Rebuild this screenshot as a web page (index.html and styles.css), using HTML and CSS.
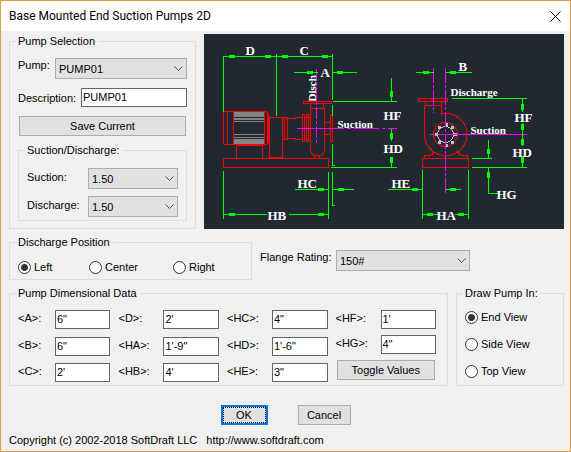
FILE: index.html
```html
<!DOCTYPE html>
<html lang="en">
<head>
<meta charset="utf-8">
<title>Base Mounted End Suction Pumps 2D</title>
<link rel="stylesheet" href="styles.css">
</head>
<body>
<form class="dialog">
  <header class="titlebar">
    <h1>Base Mounted End Suction Pumps 2D</h1>
    <button type="button" class="close" aria-label="Close"><svg width="11" height="11" viewBox="0 0 11 11"><path d="M.5 .5l10 10M10.5 .5l-10 10"/></svg></button>
  </header>
  <main class="content">
    <div class="row row-top">
      <fieldset class="selection">
        <legend>Pump Selection</legend>
        <div class="line line-pump">
          <label for="pump">Pump:</label>
          <span class="select"><select id="pump"><option>PUMP01</option></select><svg width="9" height="6" viewBox="0 0 9 6"><path d="M.5 .5l4 4 4-4"/></svg></span>
        </div>
        <div class="line line-desc">
          <label for="desc">Description:</label>
          <input type="text" id="desc" value="PUMP01">
        </div>
        <button type="button" class="button save">Save Current</button>
        <fieldset class="sizes">
          <legend>Suction/Discharge:</legend>
          <div class="line">
            <label for="suction">Suction:</label>
            <span class="select"><select id="suction"><option>1.50</option></select><svg width="9" height="6" viewBox="0 0 9 6"><path d="M.5 .5l4 4 4-4"/></svg></span>
          </div>
          <div class="line">
            <label for="discharge">Discharge:</label>
            <span class="select"><select id="discharge"><option>1.50</option></select><svg width="9" height="6" viewBox="0 0 9 6"><path d="M.5 .5l4 4 4-4"/></svg></span>
          </div>
        </fieldset>
      </fieldset>
      <svg class="drawing" viewBox="203.5 33.5 360 195" role="img" aria-label="Pump dimension drawing">
        <!-- motor cooling fins -->
        <g class="metal">
          <rect x="233.500" y="111.500" width="30" height="5"/>
          <rect x="233.500" y="117.500" width="30" height="2"/>
          <rect x="233.500" y="120.500" width="30" height="1"/>
          <rect x="233.500" y="133.500" width="30" height="1"/>
          <rect x="233.500" y="136.500" width="30" height="1"/>
          <rect x="233.500" y="138.500" width="30" height="5"/>
        </g>
        <g class="pump">
          <path d="M223 158H328V167H223ZM236 145V158M262 145V158M236 145H262"/>
          <path d="M224 111H266L268 115V142L266 144H224L223 143V112ZM227 111V144M233 111V144M264 111V144M267 113V142"/>
          <path d="M269 117H282V157H269ZM282 117H287V139H282M284 117V139M287 118H295V117H302M287 138H295V139H302"/>
          <path d="M302 114H304V141H302ZM306 114H308V141H306ZM304 117H310M304 139H310"/>
          <path d="M303 101H331V103H303ZM310 103V151L313 155H321L324 151V108M323 103V108M310 108H324M314 155V158M319 155V158"/>
          <path d="M324 122H330M324 134H330M330 115H332V141H330Z"/>
          <path d="M422 158H468V167H422ZM424 158V155H430L435 151M467 158V155H461L456 151"/>
          <path d="M418 98H447V101H418ZM425 101V105M441 101V114M424 105H441M424 105V136"/>
          <path d="M424 134A21 21 0 0 0 445 155A21 21 0 1 0 441 113.500"/>
          <circle cx="445" cy="134" r="12"/>
        </g>
        <g class="bore">
          <circle cx="445" cy="134" r="8"/>
          <path class="bolts" d="M444 124h3M450 127h3M453 134h3M450 142h3M444 145h3M437 142h3M434 134h3M437 127h3"/>
        </g>
        <g class="center">
          <path d="M316 68V144" stroke-dasharray="12 2 3 2"/>
          <path d="M296 128H343M346 128H350M353 128H378M381 128H384M387 128H396"/>
          <path d="M433 67V112M445 67V194" stroke-dasharray="15 2 3 2"/>
          <path d="M429 134H434M437 134H526"/>
        </g>
        <g class="dim">
          <path d="M223 55V111M276 53V115M332 53V99M223 56H332"/>
          <path d="M293 72H317M332 72H356M332 104V115M332 143V165H334"/>
          <path d="M332 101H396M330 167H396M391 77V101M391 128V140M391 156V167"/>
          <path d="M223 170V218M328 171V218M223 214H266M288 214H328M332 171V205H334M294 189H328M332 189H353"/>
          <path d="M415 72H433M445 72H471M451 98H526M522 98V111M522 122V145M522 157V167M471 158H491M471 167H526"/>
          <path d="M488 139V158M488 167V193H497M422 169V218M468 169V218M422 214H437M454 214H468M387 189H422M445 189H460"/>
          <g class="arrows">
            <path d="M226 56l5-1v2zM231 55h3v2h-3zM273 56l-5-1v2zM265 55h3v2h-3zM279 56l5-1v2zM284 55h3v2h-3zM330 56l-5-1v2zM322 55h3v2h-3z"/>
            <path d="M314 72l-4-1v2zM307 71h3v2h-3zM334 72l5-1v2zM339 71h3v2h-3zM226 214l5-1v2zM231 213h3v2h-3zM326 214l-5-1v2zM318 213h3v2h-3z"/>
            <path d="M326 189l-5-1v2zM318 188h3v2h-3zM335 189l5-1v2zM340 188h3v2h-3zM431 72l-5-1v2zM423 71h3v2h-3zM447 72l5-1v2zM452 71h3v2h-3z"/>
            <path d="M420 189l-5-1v2zM412 188h3v2h-3zM447 189l5-1v2zM452 188h3v2h-3zM424 214l5-1v2zM429 213h3v2h-3zM466 214l-5-1v2zM458 213h3v2h-3z"/>
            <path d="M391 99l-1-5h2zM390 91h2v3h-2zM391 130l-1 5h2zM390 135h2v3h-2zM391 165l-1-5h2zM390 157h2v3h-2z"/>
            <path d="M522 101l-1 5h2zM521 106h2v3h-2zM522 132l-1-5h2zM521 124h2v3h-2zM522 136l-1 5h2zM521 141h2v3h-2zM522 165l-1-5h2zM521 157h2v3h-2z"/>
            <path d="M488 156l-1-5h2zM487 149h2v3h-2zM488 169l-1 5h2zM487 174h2v3h-2z"/>
          </g>
        </g>
        <g class="marks">
          <text x="245" y="54">D</text><text x="299" y="54">C</text><text x="320" y="76">A</text><text x="458" y="70">B</text>
          <text x="383" y="119">HF</text><text x="383" y="152">HD</text><text x="514" y="121">HF</text><text x="512" y="156">HD</text>
          <text x="297" y="187">HC</text><text x="267" y="219">HB</text><text x="391" y="187">HE</text><text x="436" y="219">HA</text><text x="496" y="198">HG</text>
        </g>
        <g class="names">
          <text x="337" y="127">Suction</text><text x="470" y="133">Suction</text><text x="450" y="95">Discharge</text>
          <text transform="translate(315 101) rotate(-90)">Disch</text>
        </g>
      </svg>
    </div>
    <div class="row row-mid">
      <fieldset class="position">
        <legend>Discharge Position</legend>
        <label class="radio"><input type="radio" name="position" checked>Left</label>
        <label class="radio"><input type="radio" name="position">Center</label>
        <label class="radio"><input type="radio" name="position">Right</label>
      </fieldset>
      <div class="flange">
        <label for="flange">Flange Rating:</label>
        <span class="select"><select id="flange"><option>150#</option></select><svg width="9" height="6" viewBox="0 0 9 6"><path d="M.5 .5l4 4 4-4"/></svg></span>
      </div>
    </div>
    <div class="row row-data">
      <fieldset class="data">
        <legend>Pump Dimensional Data</legend>
        <div class="dims dims-narrow">
          <label for="a">&lt;A&gt;:</label><input type="text" id="a" value="6&quot;">
          <label for="b">&lt;B&gt;:</label><input type="text" id="b" value="6&quot;">
          <label for="c">&lt;C&gt;:</label><input type="text" id="c" value="2'">
        </div>
        <div class="dims">
          <label for="d">&lt;D&gt;:</label><input type="text" id="d" value="2'">
          <label for="ha">&lt;HA&gt;:</label><input type="text" id="ha" value="1'-9&quot;">
          <label for="hb">&lt;HB&gt;:</label><input type="text" id="hb" value="4'">
        </div>
        <div class="dims">
          <label for="hc">&lt;HC&gt;:</label><input type="text" id="hc" value="4&quot;">
          <label for="hd">&lt;HD&gt;:</label><input type="text" id="hd" value="1'-6&quot;">
          <label for="he">&lt;HE&gt;:</label><input type="text" id="he" value="3&quot;">
        </div>
        <div class="dims dims-last">
          <label for="hf">&lt;HF&gt;:</label><input type="text" id="hf" value="1'">
          <label for="hg">&lt;HG&gt;:</label><input type="text" id="hg" value="4&quot;">
          <button type="button" class="button toggle">Toggle Values</button>
        </div>
      </fieldset>
      <fieldset class="view">
        <legend>Draw Pump In:</legend>
        <label class="radio"><input type="radio" name="view" checked>End View</label>
        <label class="radio"><input type="radio" name="view">Side View</label>
        <label class="radio"><input type="radio" name="view">Top View</label>
      </fieldset>
    </div>
    <div class="actions">
      <button type="button" class="button ok">OK</button>
      <button type="button" class="button cancel">Cancel</button>
    </div>
    <footer><span>Copyright (c) 2002-2018 SoftDraft LLC</span><span>http://www.softdraft.com</span></footer>
  </main>
</form>
</body>
</html>
```

FILE: styles.css
```css
* { box-sizing: border-box; }

body {
  margin: 0;
  background: #f0f0f0;
  color: #000;
  font: 11px/14px "Liberation Sans", Arial, sans-serif;
}

.dialog {
  min-height: 100vh;
  border: 1px solid #e0a040;
  background: #f0f0f0;
}

.titlebar {
  display: flex;
  align-items: center;
  justify-content: space-between;
  height: 30px;
  padding: 0 9px 0 8px;
  background: #fff;
}

h1 {
  margin: 0;
  font: 12px/16px Roboto, "Open Sans", sans-serif;
}

.close {
  display: flex;
  padding: 0;
  border: 0;
  background: none;
}

svg path { fill: none; stroke: #000; }

.content {
  display: flex;
  flex-direction: column;
  gap: 6px;
  padding: 3px 6px 0 8px;
}

.row { display: grid; }
.row-top { grid-template-columns: 187px 1fr; gap: 8px; align-items: start; }
.row-mid { grid-template-columns: 243px 1fr; gap: 8px; }
.row-data { grid-template-columns: 1fr 108px; gap: 8px; }

fieldset {
  min-width: 0;
  margin: 0;
  padding: 0 8px;
  border: 1px solid #dcdcdc;
}

legend { margin: 0 0 0 -2px; padding: 0 3px 0 2px; }

input, select, button { font: inherit; color: inherit; border-radius: 0; margin: 0; }

input[type="text"] {
  width: 100%;
  min-width: 0;
  height: 19px;
  padding: 0 1px 1px;
  border: 1px solid #646464;
  background: #fff;
}

.select { display: grid; align-items: center; min-width: 0; }

.select > * { grid-area: 1 / 1; }

.select svg { justify-self: end; margin-right: 4px; pointer-events: none; }

.select path { stroke: #505050; }

select {
  appearance: none;
  width: 100%;
  height: 21px;
  padding: 0 3px;
  border: 1px solid #adadad;
  background: #e1e1e1;
}

.button {
  height: 20px;
  padding: 0;
  border: 1px solid #adadad;
  background: #e1e1e1;
  text-align: center;
}

.line { display: grid; }

.selection { height: 195px; padding-top: 10px; }
.line-pump { grid-template-columns: 37px 1fr; }
.line-desc { grid-template-columns: 63px 1fr; align-items: center; margin: 9px 0; }
.selection .save { display: block; width: calc(100% - 2px); margin-left: 1px; }

.sizes { margin-top: 7px; padding: 11px 8px 3px; }
.sizes .line { grid-template-columns: 61px 1fr; }
.sizes .line + .line { margin-top: 7px; }
.sizes label { padding-top: 2px; }

.drawing { display: block; width: 100%; height: auto; background: #212830; }
.drawing path, .drawing circle { fill: none; stroke: inherit; }
.drawing g { shape-rendering: crispEdges; }
.metal { fill: #848484; stroke: none; }
.pump { stroke: #f00; }
.bore { stroke: #c0c0c0; }
.bore .bolts { stroke-width: 3; }
.center { stroke: #f0f; }
.dim { stroke: #0f0; }
.marks, .names { fill: #fff; font-family: "Liberation Serif", serif; font-weight: bold; }
.marks { font-size: 13px; }
.names { font-size: 11px; }

.position { display: grid; grid-template-columns: 71px 84px 1fr; padding: 11px 8px 5px; }

.radio { display: flex; align-items: center; gap: 3px; }

.radio input {
  appearance: none;
  width: 13px;
  height: 13px;
  border: 1px solid #333;
  border-radius: 50%;
  background: #fff;
}

.radio input:checked { background: radial-gradient(circle, #333 3px, #fff 4px); }

.flange {
  display: grid;
  grid-template-columns: 76px 134px;
  align-items: start;
  padding-top: 15px;
}

.data { display: flex; gap: 8px; padding: 10px 8px 2px; }

.dims {
  display: grid;
  grid-template-columns: 45px 1fr;
  gap: 7px 0;
  align-items: start;
  flex: 100 1 0;
}

.dims label { padding-top: 1px; }

.dims-narrow { grid-template-columns: 37px 1fr; flex-grow: 92; }

.dims-last { row-gap: 6px; align-content: start; margin-right: 3px; }

.toggle { grid-column: 1 / -1; margin: 0 1px; }

.view { display: grid; gap: 13px; padding: 10px 8px 7px; }

.actions { display: flex; justify-content: center; gap: 30px; padding: 13px 2px 0 0; }
.actions .button { width: 53px; }
.actions .ok { width: 47px; border: 2px solid #0078d7; outline: 1px dotted #000; outline-offset: -3px; }

footer { display: flex; gap: 9px; padding-top: 2px; }
```
